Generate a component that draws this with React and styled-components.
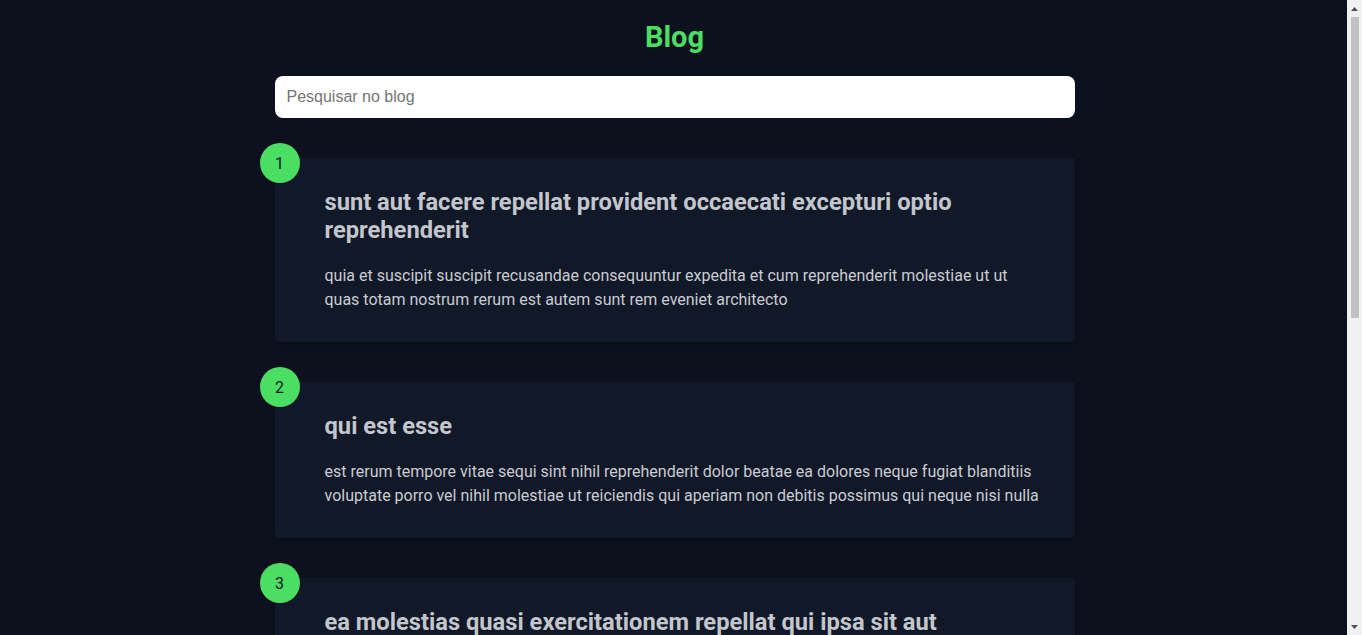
import React from "react";
import styled, { createGlobalStyle } from "styled-components";

const GlobalStyle = createGlobalStyle`
  html, body {
    margin: 0;
    padding: 0;
    background: #0d111e;
  }
  body {
    padding-right: 15px;
    font-family: Roboto, "Noto Sans", sans-serif;
    color: #c9ccd2;
  }
  * { box-sizing: border-box; }
`;

const Page = styled.main`
  width: 800px;
  margin: 0 auto;
  padding: 17px 0 40px;
  position: relative;
  left: 1px;
`;

const Heading = styled.h1`
  margin: 0 0 19px;
  text-align: center;
  font-size: 29px;
  line-height: 40px;
  font-weight: 700;
  color: #4ade63;
`;

const Search = styled.input`
  display: block;
  width: 100%;
  height: 42px;
  border: none;
  border-radius: 8px;
  padding: 0 12px;
  background: #ffffff;
  font-family: "Liberation Sans", Arial, sans-serif;
  font-size: 16px;
  color: #222;
  outline: none;
  &::placeholder { color: #757575; }
`;

const List = styled.section`
  display: flex;
  flex-direction: column;
  gap: 40px;
  margin-top: 40px;
`;

const Card = styled.article`
  position: relative;
  background: #111827;
  border-radius: 4px;
  padding: 30px 30px 30px 50px;
  box-shadow: 0 2px 6px rgba(0, 0, 0, 0.25);
`;

const Badge = styled.span`
  position: absolute;
  left: -15px;
  top: -15px;
  width: 40px;
  height: 40px;
  border-radius: 50%;
  background: #4ade63;
  color: #111827;
  display: flex;
  align-items: center;
  justify-content: center;
  font-size: 16px;
`;

const Title = styled.h2`
  margin: 0 0 20px;
  font-size: 23.7px;
  line-height: 28px;
  font-weight: 700;
  color: #c3c6cc;
`;

const Body = styled.p`
  margin: 0;
  font-size: 16px;
  line-height: 24px;
  color: #c9ccd2;
`;

const ScrollTrack = styled.div`
  position: fixed;
  top: 0;
  right: 0;
  width: 15px;
  height: 100vh;
  background: #f1f1f1;
  display: flex;
  flex-direction: column;
  align-items: center;
  z-index: 10;
`;

const Arrow = styled.div`
  width: 15px;
  height: 17px;
  display: flex;
  align-items: center;
  justify-content: center;
`;

const Thumb = styled.div`
  width: 8px;
  height: 301px;
  background: #c1c1c1;
  flex: none;
`;

const Spacer = styled.div`
  flex: 1;
`;

const posts = [
  {
    id: 1,
    title: "sunt aut facere repellat provident occaecati excepturi optio reprehenderit",
    body: "quia et suscipit suscipit recusandae consequuntur expedita et cum reprehenderit molestiae ut ut quas totam nostrum rerum est autem sunt rem eveniet architecto",
  },
  {
    id: 2,
    title: "qui est esse",
    body: "est rerum tempore vitae sequi sint nihil reprehenderit dolor beatae ea dolores neque fugiat blanditiis voluptate porro vel nihil molestiae ut reiciendis qui aperiam non debitis possimus qui neque nisi nulla",
  },
  {
    id: 3,
    title: "ea molestias quasi exercitationem repellat qui ipsa sit aut",
    body: "et iusto sed quo iure voluptatem occaecati omnis eligendi aut ad voluptatem doloribus vel accusantium quis pariatur molestiae porro eius odio et labore et velit aut",
  },
  {
    id: 4,
    title: "eum et est occaecati",
    body: "ullam et saepe reiciendis voluptatem adipisci sit amet autem assumenda provident rerum culpa quis hic commodi nesciunt rem tenetur doloremque ipsam iure quis sunt voluptatem rerum illo velit",
  },
  {
    id: 5,
    title: "nesciunt quas odio",
    body: "repudiandae veniam quaerat sunt sed alias aut fugiat sit autem sed est voluptatem omnis possimus esse voluptatibus quis est aut tenetur dolor neque",
  },
];

export default function App() {
  return (
    <>
      <GlobalStyle />
      <Page>
        <Heading>Blog</Heading>
        <Search type="text" placeholder="Pesquisar no blog" />
        <List>
          {posts.map((p) => (
            <Card key={p.id}>
              <Badge>{p.id}</Badge>
              <Title>{p.title}</Title>
              <Body>{p.body}</Body>
            </Card>
          ))}
        </List>
      </Page>
      <ScrollTrack aria-hidden="true">
        <Arrow>
          <svg width="7" height="4" viewBox="0 0 7 4"><path d="M0 4 L3.5 0 L7 4 Z" fill="#505050" /></svg>
        </Arrow>
        <Thumb />
        <Spacer />
        <Arrow>
          <svg width="7" height="4" viewBox="0 0 7 4"><path d="M0 0 L3.5 4 L7 0 Z" fill="#505050" /></svg>
        </Arrow>
      </ScrollTrack>
    </>
  );
}
